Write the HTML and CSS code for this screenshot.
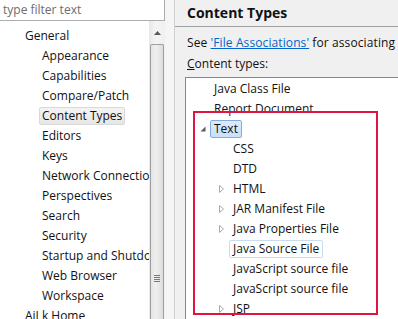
FILE: index.html
```html
<!DOCTYPE html>
<html>
<head>
<meta charset="utf-8">
<link rel="stylesheet" href="styles.css">
</head>
<body>
<div class="app">
  <div class="left">
    <div class="filter">type filter text</div>
    <div class="tree-wrap">
      <div class="tree">
        <div class="trow l1"><span class="tl">General</span></div>
        <div class="trow l2"><span class="tl">Appearance</span></div>
        <div class="trow l2"><span class="tl">Capabilities</span></div>
        <div class="trow l2"><span class="tl">Compare/Patch</span></div>
        <div class="trow l2"><span class="tl sel">Content Types</span></div>
        <div class="trow l2"><span class="tl">Editors</span></div>
        <div class="trow l2"><span class="tl">Keys</span></div>
        <div class="trow l2"><span class="tl">Network Connections</span></div>
        <div class="trow l2"><span class="tl">Perspectives</span></div>
        <div class="trow l2"><span class="tl">Search</span></div>
        <div class="trow l2"><span class="tl">Security</span></div>
        <div class="trow l2"><span class="tl">Startup and Shutdown</span></div>
        <div class="trow l2"><span class="tl">Web Browser</span></div>
        <div class="trow l2"><span class="tl">Workspace</span></div>
        <div class="trow l1"><span class="tl">AiLk Home</span></div>
      </div>
      <div class="vscroll">
        <div class="arrow-up"><svg width="7" height="4" viewBox="0 0 7 4"><polygon points="3.5,0 7,4 0,4" fill="#5a5a5a"/></svg></div>
        <div class="thumb">
          <div class="grip"><i></i><i></i><i></i><i></i></div>
        </div>
      </div>
    </div>
  </div>
  <div class="sash"></div>
  <div class="right">
    <div class="title">Content Types</div>
    <div class="body">
      <div class="see">See <a class="link">'File Associations'</a> for associating content types with file names.</div>
      <div class="label"><u>C</u>ontent types:</div>
      <div class="listbox">
        <div class="row l0"><span class="tw"></span><span class="lbl">Java Class File</span></div>
        <div class="row l0"><span class="tw"></span><span class="lbl">Report Document</span></div>
        <div class="row l0"><span class="tw"><svg width="6" height="6" viewBox="0 0 6 6"><polygon points="5.5,0.5 5.5,5.5 0.5,5.5" fill="#5b5b5b"/></svg></span><span class="lbl selected">Text</span></div>
        <div class="row l1"><span class="tw"></span><span class="lbl">CSS</span></div>
        <div class="row l1"><span class="tw"></span><span class="lbl">DTD</span></div>
        <div class="row l1"><span class="tw"><svg width="6" height="8" viewBox="0 0 6 8"><polygon points="0.5,0.5 4.5,4 0.5,7.5" fill="none" stroke="#a8a8a8" stroke-width="1"/></svg></span><span class="lbl">HTML</span></div>
        <div class="row l1"><span class="tw"><svg width="6" height="8" viewBox="0 0 6 8"><polygon points="0.5,0.5 4.5,4 0.5,7.5" fill="none" stroke="#a8a8a8" stroke-width="1"/></svg></span><span class="lbl">JAR Manifest File</span></div>
        <div class="row l1"><span class="tw"><svg width="6" height="8" viewBox="0 0 6 8"><polygon points="0.5,0.5 4.5,4 0.5,7.5" fill="none" stroke="#a8a8a8" stroke-width="1"/></svg></span><span class="lbl">Java Properties File</span></div>
        <div class="row l1"><span class="tw"></span><span class="lbl hover">Java Source File</span></div>
        <div class="row l1"><span class="tw"></span><span class="lbl">JavaScript source file</span></div>
        <div class="row l1"><span class="tw"></span><span class="lbl">JavaScript source file</span></div>
        <div class="row l1"><span class="tw"><svg width="6" height="8" viewBox="0 0 6 8"><polygon points="0.5,0.5 4.5,4 0.5,7.5" fill="none" stroke="#a8a8a8" stroke-width="1"/></svg></span><span class="lbl">JSP</span></div>
        <div class="annot"></div>
      </div>
    </div>
  </div>
</div>
</body>
</html>
```

FILE: styles.css
```css
html, body {
  margin: 0;
  padding: 0;
  width: 398px;
  height: 319px;
  overflow: hidden;
  background: #f0f0f0;
  font-family: "Open Sans", "Noto Sans", sans-serif;
  font-size: 12px;
  color: #111;
}
.app {
  display: flex;
  height: 319px;
  overflow: hidden;
}
.left {
  width: 165px;
  flex: none;
  display: flex;
  flex-direction: column;
  background: #fff;
  overflow: hidden;
}
.filter {
  box-sizing: border-box;
  border-right: 1px solid #abadb3;
  border-bottom: 1px solid #abadb3;
  padding-left: 3px;
  padding-top: 2px;
  line-height: 18px;
  color: #6d6d6d;
  background: #fff;
  margin-top: -1px;
  height: 22px;
  flex: none;
}
.tree-wrap {
  flex: 1;
  display: flex;
  min-height: 0;
  overflow: hidden;
}
.tree {
  width: 149px;
  flex: none;
  overflow: hidden;
  padding-top: 5px;
  background: #fff;
}
.trow {
  height: 20px;
  display: flex;
  align-items: center;
  white-space: nowrap;
}
.trow.l1 { padding-left: 22px; }
.trow.l2 { padding-left: 39px; }
.tl {
  border: 1px solid transparent;
  padding: 0 2px;
  line-height: 16px;
  border-radius: 2px;
}
.tl.sel {
  background: linear-gradient(#f4f4f4, #e6e6e6);
  border-color: #d9d9d9;
}
.vscroll {
  width: 16px;
  flex: none;
  background: linear-gradient(90deg, #e8e8e8, #f4f4f4 40%, #f0f0f0);
  display: flex;
  flex-direction: column;
  align-items: center;
}
.arrow-up {
  height: 20px;
  display: flex;
  align-items: center;
  justify-content: center;
  padding-top: 2px;
  flex: none;
}
.thumb {
  margin-top: 1px;
  width: 14px;
  flex: 1;
  box-sizing: border-box;
  border: 1px solid #9e9e9e;
  border-bottom: none;
  border-radius: 2px 2px 0 0;
  background: linear-gradient(90deg, #e4e4e4, #efefef 40%, #dcdcdc);
  display: flex;
  justify-content: center;
  padding-top: 230px;
}
.grip {
  display: flex;
  flex-direction: column;
  gap: 1px;
}
.grip i {
  display: block;
  width: 6px;
  height: 1px;
  background: #7a7a7a;
}
.sash {
  width: 9px;
  flex: none;
  background: #f5f5f5;
  border-right: 1px solid #d0d0d0;
}
.right {
  flex: 1;
  min-width: 0;
  display: flex;
  flex-direction: column;
  background: #f0f0f0;
  overflow: hidden;
}
.title {
  height: 26px;
  border-bottom: 1px solid #a0a0a0;
  padding-left: 12px;
  font-weight: bold;
  font-size: 14px;
  line-height: 26px;
  color: #111;
  white-space: nowrap;
  flex: none;
}
.body {
  padding-left: 10px;
  flex: 1;
  min-height: 0;
}
.see {
  margin-top: 8px;
  padding-left: 2px;
  line-height: 16px;
  white-space: nowrap;
  overflow: hidden;
  letter-spacing: 0.1px;
}
.link {
  color: #0066cc;
  text-decoration: underline;
}
.label {
  margin-top: 5px;
  padding-left: 2px;
  line-height: 16px;
}
.listbox {
  position: relative;
  margin-top: 5px;
  background: #fff;
  border: 1px solid #828790;
  border-right: none;
  padding-top: 1px;
  height: 260px;
}
.row {
  height: 20px;
  display: flex;
  align-items: center;
  white-space: nowrap;
}
.row.l0 { padding-left: 9px; }
.row.l1 { padding-left: 28px; }
.tw {
  width: 15px;
  flex: none;
  display: flex;
  align-items: center;
  justify-content: center;
}
.lbl {
  border: 1px solid transparent;
  padding: 0 3px;
  line-height: 16px;
  border-radius: 2px;
}
.lbl.selected {
  background: linear-gradient(#dcebfc, #c9e0fa);
  border-color: #84acdd;
}
.lbl.hover {
  border-color: #c7dcf3;
}
.annot {
  position: absolute;
  left: 7px;
  top: 33px;
  width: 185px;
  height: 204px;
  border: 2px solid #e0153f;
  box-sizing: border-box;
  pointer-events: none;
}
```
